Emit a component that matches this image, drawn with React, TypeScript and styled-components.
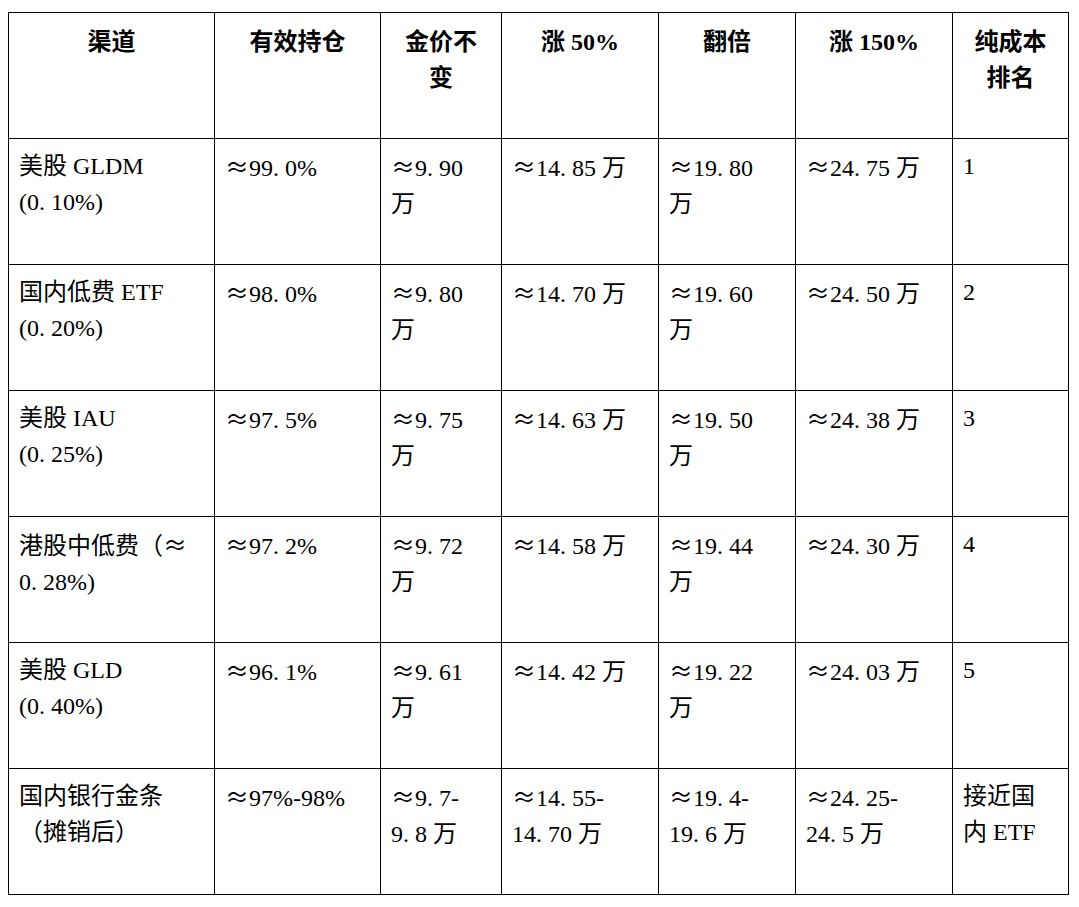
import React from "react";
import styled, { createGlobalStyle } from "styled-components";

const Global = createGlobalStyle`
  html, body { margin: 0; padding: 0; background: #ffffff; }
  body { font-family: "Liberation Serif", "Noto Sans CJK SC", serif; color: #000; }
`;

const Page = styled.div`
  padding: 12px 0 0 8px;
`;

const Table = styled.table`
  border-collapse: collapse;
  table-layout: fixed;
  width: 1060px;
  font-family: "Liberation Serif", "Noto Sans CJK SC", serif;
  font-size: 24px;
  line-height: 36px;
  color: #000;
`;

const Col = styled.col<{ $w: number }>`
  width: ${(p) => p.$w}px;
`;

const Row = styled.tr`
  height: 126px;
`;

const HeadCell = styled.th`
  border: 1px solid #000;
  padding: 11px 8px 0;
  vertical-align: top;
  text-align: center;
  font-weight: 700;
`;

const Cell = styled.td`
  border: 1px solid #000;
  padding: 9px 8px 0 10px;
  vertical-align: top;
  text-align: left;
  font-weight: 400;
`;

const Line = styled.span`
  display: block;
  white-space: pre;
`;

const Wide = styled.span`
  display: inline-block;
  width: 1em;
  text-align: center;
  font-family: "Noto Sans CJK SC", sans-serif;
`;

const Half = styled.span`
  display: inline-block;
  width: 0.5em;
`;

function renderText(s: string) {
  const out: React.ReactNode[] = [];
  let buf = "";
  let k = 0;
  const flush = () => {
    if (buf) {
      out.push(<React.Fragment key={k++}>{buf}</React.Fragment>);
      buf = "";
    }
  };
  for (const ch of s) {
    if (ch === "≈") {
      flush();
      out.push(<Wide key={k++}>≈</Wide>);
    } else if (ch === ".") {
      flush();
      out.push(<Half key={k++}>{ch}</Half>);
    } else {
      buf += ch;
    }
  }
  flush();
  return out;
}

const widths = [206, 166, 121, 157, 137, 157, 116];

const header: string[][] = [
  ["渠道"],
  ["有效持仓"],
  ["金价不", "变"],
  ["涨 50%"],
  ["翻倍"],
  ["涨 150%"],
  ["纯成本", "排名"],
];

const rows: string[][][] = [
  [["美股 GLDM", "(0.10%)"], ["≈99.0%"], ["≈9.90", "万"], ["≈14.85 万"], ["≈19.80", "万"], ["≈24.75 万"], ["1"]],
  [["国内低费 ETF", "(0.20%)"], ["≈98.0%"], ["≈9.80", "万"], ["≈14.70 万"], ["≈19.60", "万"], ["≈24.50 万"], ["2"]],
  [["美股 IAU", "(0.25%)"], ["≈97.5%"], ["≈9.75", "万"], ["≈14.63 万"], ["≈19.50", "万"], ["≈24.38 万"], ["3"]],
  [["港股中低费（≈", "0.28%)"], ["≈97.2%"], ["≈9.72", "万"], ["≈14.58 万"], ["≈19.44", "万"], ["≈24.30 万"], ["4"]],
  [["美股 GLD", "(0.40%)"], ["≈96.1%"], ["≈9.61", "万"], ["≈14.42 万"], ["≈19.22", "万"], ["≈24.03 万"], ["5"]],
  [["国内银行金条", "（摊销后）"], ["≈97%-98%"], ["≈9.7-", "9.8 万"], ["≈14.55-", "14.70 万"], ["≈19.4-", "19.6 万"], ["≈24.25-", "24.5 万"], ["接近国", "内 ETF"]],
];

export default function App() {
  return (
    <Page>
      <Global />
      <Table>
        <colgroup>
          {widths.map((w, i) => (
            <Col key={i} $w={w} />
          ))}
        </colgroup>
        <thead>
          <Row>
            {header.map((lines, i) => (
              <HeadCell key={i}>
                {lines.map((l, j) => (
                  <Line key={j}>{l}</Line>
                ))}
              </HeadCell>
            ))}
          </Row>
        </thead>
        <tbody>
          {rows.map((r, ri) => (
            <Row key={ri}>
              {r.map((lines, ci) => (
                <Cell key={ci}>
                  {lines.map((l, j) => (
                    <Line key={j}>{renderText(l)}</Line>
                  ))}
                </Cell>
              ))}
            </Row>
          ))}
        </tbody>
      </Table>
    </Page>
  );
}
